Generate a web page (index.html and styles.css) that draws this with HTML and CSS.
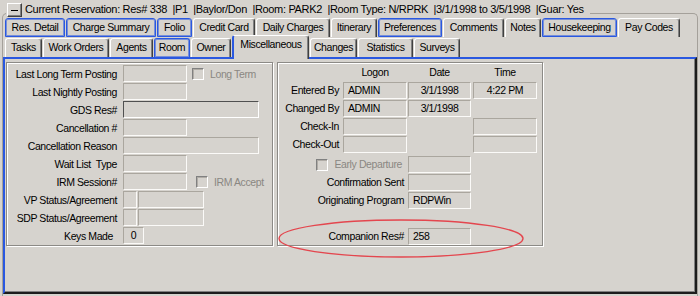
FILE: index.html
```html
<!DOCTYPE html>
<html>
<head>
<meta charset="utf-8">
<link rel="stylesheet" href="styles.css">
</head>
<body>
<div class="frame">
  <div class="caption">
    <span class="minbtn"><span class="minbar"></span></span>
    <span class="captext">Current Reservation: Res# 338 &nbsp;|P1 &nbsp;|Baylor/Don &nbsp;|Room: PARK2 &nbsp;|Room Type: N/RPRK &nbsp;|3/1/1998 to 3/5/1998 &nbsp;|Guar: Yes</span>
  </div>
  <div class="tabs row1">
    <div class="tab blue t-res">Res. Detail</div>
    <div class="tab blue t-chg">Charge Summary</div>
    <div class="tab blue t-fol">Folio</div>
    <div class="tab t-cc">Credit Card</div>
    <div class="tab t-dc">Daily Charges</div>
    <div class="tab t-iti">Itinerary</div>
    <div class="tab blue t-pre">Preferences</div>
    <div class="tab t-com">Comments</div>
    <div class="tab t-not">Notes</div>
    <div class="tab blue t-hk">Housekeeping</div>
    <div class="tab t-pay">Pay Codes</div>
  </div>
  <div class="tabs row2">
    <div class="tab t-tsk">Tasks</div>
    <div class="tab t-wo">Work Orders</div>
    <div class="tab t-agt">Agents</div>
    <div class="tab blue t-rm">Room</div>
    <div class="tab t-own">Owner</div>
    <div class="tab sel t-misc">Miscellaneous</div>
    <div class="tab t-chn">Changes</div>
    <div class="tab t-sta">Statistics</div>
    <div class="tab t-sur">Surveys</div>
  </div>
  <div class="panel">
    <div class="group left">
      <div class="row"><span class="lbl">Last Long Term Posting</span><span class="fld w64"></span><span class="chk c1"></span><span class="dis">Long Term</span></div>
      <div class="row"><span class="lbl">Last Nightly Posting</span><span class="fld w64"></span></div>
      <div class="row"><span class="lbl">GDS Res#</span><span class="fld w136 sunk"></span></div>
      <div class="row"><span class="lbl">Cancellation #</span><span class="fld w64"></span></div>
      <div class="row"><span class="lbl">Cancellation Reason</span><span class="fld w136"></span></div>
      <div class="row"><span class="lbl">Wait List &nbsp;Type</span><span class="fld w64"></span></div>
      <div class="row"><span class="lbl">IRM Session#</span><span class="fld w64"></span><span class="chk c2"></span><span class="dis">IRM Accept</span></div>
      <div class="row"><span class="lbl">VP Status/Agreement</span><span class="fld w14"></span><span class="fld w66"></span></div>
      <div class="row"><span class="lbl">SDP Status/Agreement</span><span class="fld w14"></span><span class="fld w66"></span></div>
      <div class="row"><span class="lbl keys">Keys Made</span><span class="fld w21 ctr">0</span></div>
    </div>
    <div class="group right">
      <div class="rgrid">
        <span></span><span class="hd w64">Logon</span><span class="hd w63">Date</span><span class="hd w64">Time</span>

        <span class="rl">Entered By</span><span class="fld w64">ADMIN</span><span class="fld w63 ctr">3/1/1998</span><span class="fld w64 ctr">4:22 PM</span>

        <span class="rl">Changed By</span><span class="fld w64">ADMIN</span><span class="fld w63 ctr">3/1/1998</span><span></span>

        <span class="rl">Check-In</span><span class="fld w64"></span><span></span><span class="fld w64"></span>

        <span class="rl">Check-Out</span><span class="fld w64"></span><span></span><span class="fld w64"></span>

        <span class="wide early"><span class="chk"></span><span class="dis">Early Departure</span></span><span class="fld w63 early"></span><span></span>

        <span class="wide">Confirmation Sent</span><span class="fld w63"></span><span></span>

        <span class="wide">Originating Program</span><span class="fld w63">RDPWin</span><span></span>

        <span class="wide"></span><span></span><span></span>

        <span class="wide">Companion Res#</span><span class="fld w63">258</span><span></span>
      </div>
      <svg class="ring" width="250" height="42" viewBox="0 0 250 42"><ellipse cx="125" cy="20.5" rx="122" ry="18.5" fill="none" stroke="#e4464e" stroke-width="1.4"/></svg>
    </div>
  </div>
</div>
</body>
</html>
```
FILE: styles.css
```css
html, body {
  margin: 0;
  padding: 0;
}
body {
  width: 700px;
  height: 296px;
  overflow: hidden;
  background: #d6d3ce;
  color: #000;
  font-family: "Liberation Sans", Arial, sans-serif;
  font-size: 10.5px;
  letter-spacing: -0.4px;
}
.frame {
  margin: 13px 2px 0 2px;
  height: 283px;
  box-sizing: border-box;
  border: 1px solid #a4a09a;
  border-bottom: 0;
  border-radius: 5px 5px 0 0;
}
.caption {
  display: flex;
  align-items: flex-start;
  width: fit-content;
  height: 14px;
  margin: -11px 0 0 3px;
  padding: 0 6px 0 1px;
  background: #d6d3ce;
}
.minbtn {
  width: 15px;
  height: 14px;
  box-sizing: border-box;
  border: 1px solid;
  border-color: #fff #404040 #404040 #fff;
  box-shadow: inset -1px -1px 0 #808080;
  display: flex;
  align-items: center;
  justify-content: center;
  margin-right: 3px;
}
.minbar {
  width: 7px;
  height: 1px;
  background: #000;
}
.captext {
  font-size: 11px;
  letter-spacing: -0.33px;
  line-height: 12px;
  white-space: nowrap;
}
.tabs {
  display: flex;
  align-items: flex-start;
  gap: 1px;
  height: 19px;
  padding-left: 2px;
  margin-top: 1px;
}
.tab {
  height: 19px;
  box-sizing: border-box;
  text-align: center;
  line-height: 17px;
  white-space: nowrap;
  border-top: 1px solid #fff;
  border-left: 1px solid #fff;
  border-right: 1px solid #404040;
  box-shadow: inset -1px 0 0 #808080;
  border-radius: 3px 3px 0 0;
}
.t-res { width: 60px; }
.t-chg { width: 90px; }
.t-fol { width: 35px; }
.t-cc { width: 62px; }
.t-dc { width: 74px; }
.t-iti { width: 46px; }
.t-pre { width: 64px; }
.t-com { width: 61px; }
.t-not { width: 36px; }
.t-hk { width: 75px; }
.t-pay { width: 62px; }
.t-tsk { width: 37px; }
.t-wo { width: 66px; }
.t-agt { width: 43px; }
.t-rm { width: 36px; }
.t-own { width: 40px; }
.t-misc { width: 77px; }
.t-chn { width: 47px; }
.t-sta { width: 55px; }
.t-sur { width: 46px; }
.tab.blue {
  border-color: #2a58e0;
  box-shadow: inset 0 0 0 1px rgba(42, 88, 224, 0.55);
}
.row1 .tab.blue {
  border-bottom: 1px solid #2a58e0;
}
.tab.sel {
  position: relative;
  z-index: 1;
  height: 24px;
  margin-top: -3px;
  background: #d6d3ce;
  border-left: 2px solid #2a58e0;
  box-shadow: inset -1px 0 0 #808080;
  line-height: 16px;
}
.panel {
  height: 237px;
  box-sizing: border-box;
  display: flex;
  align-items: flex-start;
  padding: 3px 0 0 1px;
  border-left: 2px solid #2a58e0;
  border-top: 2px solid #2a58e0;
  border-right: 2px solid #1c1c1c;
  border-bottom: 2px solid #1c1c1c;
  box-shadow: inset -1px -1px 0 #808080;
}
.group {
  height: 184px;
  box-sizing: border-box;
  border: 1px solid #8c8a86;
  box-shadow: inset 1px 1px 0 #fff, 1px 1px 0 #fff;
}
.left {
  width: 267px;
  padding-top: 2px;
}
.right {
  width: 266px;
  margin-left: 4px;
  padding-top: 1px;
  position: relative;
}
.row {
  display: flex;
  align-items: center;
  height: 17px;
  margin-bottom: 1px;
}
.lbl {
  width: 110px;
  margin-right: 6px;
  text-align: right;
  white-space: nowrap;
}
.lbl.keys {
  width: 106px;
  margin-right: 10px;
}
.fld {
  display: block;
  height: 17px;
  box-sizing: border-box;
  border: 1px solid;
  border-color: #aaa69e #fbfaf8 #fbfaf8 #aaa69e;
  padding-left: 4px;
  line-height: 15px;
  white-space: nowrap;
  overflow: hidden;
}
.fld.sunk {
  border-color: #505050 #fff #fff #505050;
}
.fld.ctr {
  padding-left: 0;
  text-align: center;
}
.w14 { width: 14px; margin-right: 1px; }
.w21 { width: 21px; }
.w63 { width: 63px; }
.w64 { width: 64px; }
.w66 { width: 66px; }
.w136 { width: 136px; }
.chk {
  display: block;
  width: 12px;
  height: 12px;
  box-sizing: border-box;
  border: 1px solid;
  border-color: #808080 #fff #fff #808080;
  box-shadow: inset 1px 1px 0 #b0aca6;
}
.chk.c1 { margin-left: 5px; }
.chk.c2 { margin-left: 9px; }
.dis {
  color: #8a8782;
  margin-left: 6px;
  white-space: nowrap;
}
.rgrid {
  display: grid;
  grid-template-columns: 65px 65px 65px 64px;
  row-gap: 1px;
  align-items: start;
}
.rgrid > span {
  height: 17px;
  line-height: 17px;
  white-space: nowrap;
}
.rgrid > .fld {
  line-height: 15px;
}
.hd {
  text-align: center;
}
.rl {
  text-align: right;
  padding-right: 4px;
}
.wide {
  grid-column: 1 / 3;
  text-align: right;
  padding-right: 4px;
}
.wide.early {
  display: flex;
  justify-content: flex-end;
  align-items: center;
  padding-right: 6px;
}
.rgrid > .early {
  margin-top: 2px;
}
.ring {
  position: absolute;
  left: -2px;
  top: 155px;
  overflow: visible;
}
```
